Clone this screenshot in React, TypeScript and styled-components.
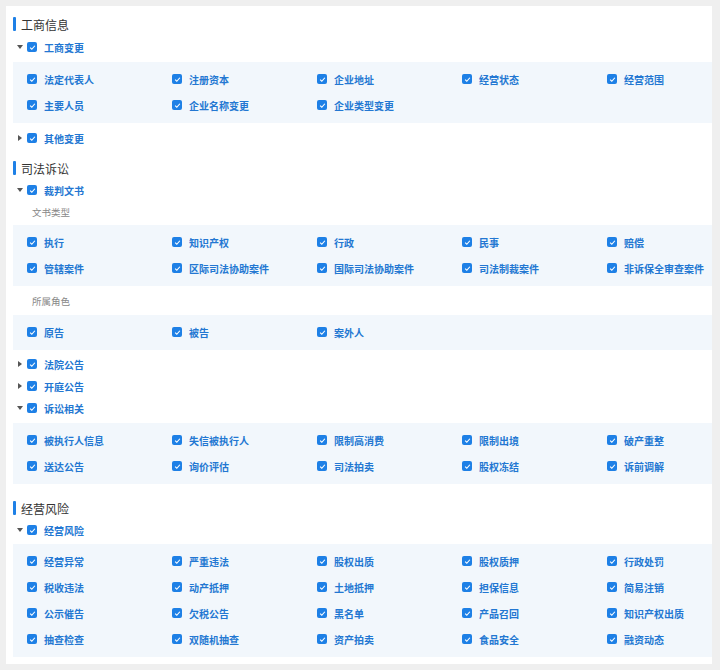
import React from "react";
import styled, { createGlobalStyle } from "styled-components";

const GlobalStyle = createGlobalStyle`
	html, body {
		margin: 0;
		padding: 0;
		background: #efefef;
	}
	body {
		font-family: "Noto Sans CJK SC", "Noto Sans", sans-serif;
	}
`;

const Page = styled.div`
	width: 720px;
	height: 670px;
	padding: 6px 8px 0 6px;
	box-sizing: border-box;
`;

const Card = styled.div`
	background: #fff;
	padding: 7px 0 7px 7px;
	box-sizing: border-box;
`;

const SectionTitle = styled.div<{ $gap?: number }>`
	display: flex;
	align-items: center;
	height: 22px;
	margin-top: ${(p) => p.$gap ?? 0}px;
	font-size: 12px;
	color: #333;

	&::before {
		content: "";
		width: 3px;
		height: 14px;
		background: #1e80e6;
		margin-right: 5px;
		border-radius: 1px;
	}
`;

const TreeRow = styled.div<{ $gap?: number }>`
	display: flex;
	align-items: center;
	height: 22px;
	margin-top: ${(p) => p.$gap ?? 0}px;
`;

const Caret = styled.span<{ $open: boolean }>`
	width: 14px;
	display: flex;
	justify-content: center;

	&::before {
		content: "";
		border-style: solid;
		border-color: transparent;
		${(p) =>
			p.$open
				? `border-width: 4px 3px 0 3px; border-top-color: #555;`
				: `border-width: 3px 0 3px 4px; border-left-color: #555;`}
	}
`;

const Box = styled.span`
	width: 10px;
	height: 10px;
	border-radius: 2px;
	background: #1e80e6;
	flex-shrink: 0;
	display: flex;
	align-items: center;
	justify-content: center;
	margin-right: 7px;
`;

const Label = styled.span`
	font-size: 10px;
	font-weight: 600;
	color: #2377d2;
	white-space: nowrap;
`;

const SubLabel = styled.div<{ $gap?: number }>`
	height: 22px;
	line-height: 22px;
	padding-left: 19px;
	margin-top: ${(p) => p.$gap ?? 0}px;
	font-size: 9.5px;
	color: #888;
`;

const Panel = styled.div<{ $gap?: number }>`
	background: #f2f7fc;
	margin-top: ${(p) => p.$gap ?? 3}px;
	padding: 4px 0 5px 14px;
	display: grid;
	grid-template-columns: repeat(5, 145px);
	grid-auto-rows: 26px;
`;

const Item = styled.div`
	display: flex;
	align-items: center;
`;

const Check = () => (
	<Box>
		<svg width="7" height="7" viewBox="0 0 8 8">
			<path d="M1.3 4.2 L3.2 6 L6.7 2" fill="none" stroke="#fff" strokeWidth="1.3" />
		</svg>
	</Box>
);

const Node = ({ label, open, gap }: { label: string; open: boolean; gap?: number }) => (
	<TreeRow $gap={gap}>
		<Caret $open={open} />
		<Check />
		<Label>{label}</Label>
	</TreeRow>
);

const Grid = ({ items, gap }: { items: string[]; gap?: number }) => (
	<Panel $gap={gap}>
		{items.map((t) => (
			<Item key={t}>
				<Check />
				<Label>{t}</Label>
			</Item>
		))}
	</Panel>
);

export default function App() {
	return (
		<>
			<GlobalStyle />
			<Page>
				<Card>
					<SectionTitle>工商信息</SectionTitle>
					<Node label="工商变更" open gap={1} />
					<Grid
						gap={4}
						items={["法定代表人", "注册资本", "企业地址", "经营状态", "经营范围", "主要人员", "企业名称变更", "企业类型变更"]}
					/>
					<Node label="其他变更" open={false} gap={4} />

					<SectionTitle $gap={8}>司法诉讼</SectionTitle>
					<Node label="裁判文书" open />
					<SubLabel>文书类型</SubLabel>
					<Grid
						gap={2}
						items={["执行", "知识产权", "行政", "民事", "赔偿", "管辖案件", "区际司法协助案件", "国际司法协助案件", "司法制裁案件", "非诉保全审查案件"]}
					/>
					<SubLabel $gap={4}>所属角色</SubLabel>
					<Grid gap={3} items={["原告", "被告", "案外人"]} />
					<Node label="法院公告" open={false} gap={3} />
					<Node label="开庭公告" open={false} />
					<Node label="诉讼相关" open />
					<Grid
						gap={4}
						items={["被执行人信息", "失信被执行人", "限制高消费", "限制出境", "破产重整", "送达公告", "询价评估", "司法拍卖", "股权冻结", "诉前调解"]}
					/>

					<SectionTitle $gap={13}>经营风险</SectionTitle>
					<Node label="经营风险" open />
					<Grid
						gap={3}
						items={[
							"经营异常", "严重违法", "股权出质", "股权质押", "行政处罚",
							"税收违法", "动产抵押", "土地抵押", "担保信息", "简易注销",
							"公示催告", "欠税公告", "黑名单", "产品召回", "知识产权出质",
							"抽查检查", "双随机抽查", "资产拍卖", "食品安全", "融资动态",
						]}
					/>
				</Card>
			</Page>
		</>
	);
}
